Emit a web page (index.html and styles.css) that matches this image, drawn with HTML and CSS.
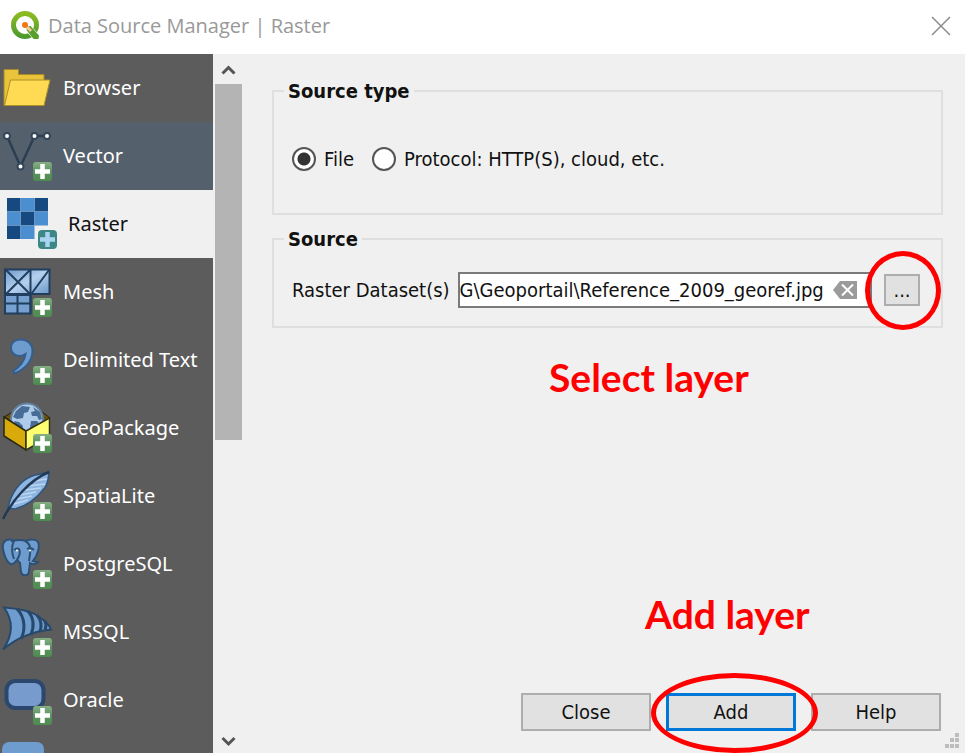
FILE: index.html
```html
<!DOCTYPE html>
<html lang="en">
<head>
<meta charset="utf-8">
<title>Data Source Manager | Raster</title>
<link rel="stylesheet" href="styles.css">
</head>
<body>
<svg class="defs" aria-hidden="true">
  <defs>
    <linearGradient id="sky" x1="0" y1="0" x2="1" y2="1"><stop offset="0" stop-color="#6f9bcb"/><stop offset="0.5" stop-color="#b4d0ee"/><stop offset="1" stop-color="#6b98c9"/></linearGradient>
    <linearGradient id="leaf" x1="0" y1="0" x2="0" y2="1"><stop offset="0" stop-color="#86b085"/><stop offset="0.5" stop-color="#5c9160"/><stop offset="1" stop-color="#4f8b4f"/></linearGradient>
    <linearGradient id="ring" x1="0" y1="0" x2="0" y2="1"><stop offset="0" stop-color="#8dbb22"/><stop offset="1" stop-color="#4f9a2f"/></linearGradient>
    <g id="plus">
      <rect x="33" y="40" width="19" height="19" rx="3" fill="url(#leaf)"/>
      <path d="M42.500 42v15M35 49.500h15" stroke="#fff" stroke-width="4.500" fill="none"/>
    </g>
  </defs>
</svg>
<header class="titlebar">
  <svg class="logo" viewBox="0 0 30 30" aria-hidden="true">
    <circle cx="15" cy="14" r="11.500" fill="none" stroke="url(#ring)" stroke-width="5"/>
    <path d="M14 13l5 0 10 10.500v4h-6L14 18z" fill="#fff"/>
    <path d="M17 15.500l3.500-.5 8.500 9.500-.5 3.500h-5L16.500 19z" fill="#579f2c"/>
    <path d="M15 14l6 6" stroke="#f9c79b" stroke-width="3"/>
    <circle cx="15" cy="14" r="3" fill="#ee7913"/>
  </svg>
  <h1 class="title">Data Source Manager | Raster</h1>
  <button class="window-close" type="button" aria-label="Close window">
    <svg viewBox="0 0 20 20"><path d="M1 1l18 18M19 1L1 19" stroke="#8b8b8b" stroke-width="1.500"/></svg>
  </button>
</header>
<div class="body">
  <nav class="sources">
    <a class="source" href="#browser">
      <svg viewBox="0 0 60 68"><path d="M4 51V15.500h14.500v5H44V51z" fill="#e9c33a" stroke="#a58a26"/><path d="M10.500 26H50l-6 25.500H4.500z" fill="#fedb53" stroke="#ae9228"/></svg>
      Browser</a>
    <a class="source hovered" href="#vector">
      <svg viewBox="0 0 60 68"><path d="M7 14l13.500 30.500L34.500 14H47" fill="none" stroke="#2b3e52" stroke-width="2.500"/><g fill="#fff" stroke="#34465a" stroke-width="2"><circle cx="7" cy="14" r="3"/><circle cx="20.500" cy="44.500" r="3"/><circle cx="34.500" cy="14" r="3"/><circle cx="47" cy="14" r="3"/></g><use href="#plus"/></svg>
      Vector</a>
    <a class="source selected" href="#raster">
      <svg viewBox="0 0 60 68"><path d="M2 8h41v27.500H29.500V49H2z" fill="#4b8fd0"/><path d="M2 8h13.500v13.500H2zM29.500 8H43v13.500H29.500zM15.500 21.500h14v14h-14zM2 35.500h13.500V49H2z" fill="#16497f"/><path d="M15.500 8v41M29.500 8v27.500M2 21.500h41M2 35.500h41" stroke="#a6bed5" opacity=".5"/><rect x="33" y="40" width="19" height="19" rx="4" fill="#3d8784"/><path d="M42.500 42v15M35 49.500h15" stroke="#a9d4f2" stroke-width="4.500"/></svg>
      Raster</a>
    <a class="source" href="#mesh">
      <svg viewBox="0 0 60 68"><g stroke="#213e5e" stroke-width="2"><path d="M5 11.500h44.500V36H5z" fill="url(#sky)"/><path d="M5 36h25.500v19.500H5z" fill="#75a0d0"/><path d="M6 12l24 24M30 12L6 36M32 35l17-23M30.500 11v44.500M17.500 38v17M5 45.500h25" fill="none"/><path d="M4 36.500h27" stroke-width="3"/></g><use href="#plus"/></svg>
      Mesh</a>
    <a class="source" href="#delimited-text">
      <svg viewBox="0 0 60 68"><path d="M20.500 13.500C14.500 13.500 11 17 11 22c0 5 4 8 8.500 8 2.500 0 4-.8 6-2-1 7-5 12-12 17l1 2.500C25 43 32 36 32.500 25.500c.3-7-5-12-12-12z" fill="#6e9cce" stroke="#335e8e" stroke-width="2"/><use href="#plus"/></svg>
      Delimited Text</a>
    <a class="source" href="#geopackage">
      <svg viewBox="0 0 60 68"><path d="M4 23l10-6h27l9 7-24 14z" fill="#6b5209" stroke="#222"/><circle cx="27" cy="25.500" r="16" fill="#aecbe9" stroke="#63809f" stroke-width="2"/><path d="M16 17l6-5 8 1-2 5-4 1-1 5-6 1-4-2zM33 13l7 5 2 7-3 1-2-4-5 0-1-4 4-1zM14 27l5 1 4 4-1 5-5-2zM31 27l6 0 3 4-5 6-5-3z" fill="#476d97"/><path d="M4 23l22 14v19L4 42z" fill="#d8aa0a" stroke="#282717" stroke-width="1.500"/><path d="M26 37l23.500-13v19L26 56z" fill="#ffff72" stroke="#353416" stroke-width="1.500"/><use href="#plus"/></svg>
      GeoPackage</a>
    <a class="source" href="#spatialite">
      <svg viewBox="0 0 60 68"><path d="M8 46C11 31 20 19 31 14.500c6-2.500 12-2 18-5-1 6 0 10-4 16C37 36 27 44 15 47z" fill="#8eb5df" stroke="#2e557e" stroke-width="1.500"/><path d="M17 37l15-3M20 33l16-3M24 28l17-2M28 24l17-2M14 42l14-4M33 19l14-2" stroke="#bcd6f1" stroke-width="1.500"/><path d="M49 10C30 18 13 37 3 57" fill="none" stroke="#213956" stroke-width="2.500"/><use href="#plus"/></svg>
      SpatiaLite</a>
    <a class="source" href="#postgresql">
      <svg viewBox="0 0 60 68"><g fill="#6e9cce" stroke="#2d5075" stroke-width="2"><path d="M12 10C5 8 2 13 3 19c1 6 4 14 8 15 3 1 4-2 6-4l3 3 1 9c1 5 8 4 8-1l1-8c3 2 6 1 8-1l-5-1c5-6 7-15 5-19-2-3-8-3-12-1-5-2-10-1-14 0z"/><path d="M14 11c-3 5-2 13 0 18M25 11c5 2 6 7 5 13l-1 7M14 20c5-4 7 0 5 6l-2 4M27 19c3-2 5-1 7 1" fill="none"/></g><circle cx="17" cy="20.500" r="1" fill="#fff"/><circle cx="30" cy="20.500" r="1" fill="#fff"/><use href="#plus"/></svg>
      PostgreSQL</a>
    <a class="source" href="#mssql">
      <svg viewBox="0 0 60 68"><g fill="#6e9cce" stroke="#28496c" stroke-width="2"><path d="M4 9.500c14 1 25 3 33 8 6 4 12 8 14 14-19 2-35 9-48 20 9-13 11-28 1-42z"/><path d="M17 11c9 9 8 22 4 30M28 13c7 8 6 16 3 24M37 17c5 6 5 11 3 17M45 23c2 4 1 6 0 9" fill="none" stroke-width="3"/></g><use href="#plus"/></svg>
      MSSQL</a>
    <a class="source" href="#oracle">
      <svg viewBox="0 0 60 68"><rect x="6.500" y="15" width="37" height="27" rx="9" fill="#779bcd" stroke="#2b476d" stroke-width="4"/><use href="#plus"/></svg>
      Oracle</a>
    <a class="source" href="#more" aria-label="More sources">
      <svg viewBox="0 0 60 68"><rect x="2" y="8" width="42" height="36" rx="7" fill="#6e9cce"/></svg></a>
  </nav>
  <div class="scrollbar" aria-hidden="true">
    <svg class="arrow" viewBox="0 0 27 30"><path d="M7.500 19.500l6-6 6 6" fill="none" stroke="#555" stroke-width="3"/></svg>
    <div class="thumb"></div>
    <svg class="arrow down" viewBox="0 0 27 30"><path d="M7.500 15l6 6 6-6" fill="none" stroke="#555" stroke-width="3"/></svg>
  </div>
  <main class="panel">
    <fieldset class="group">
      <legend>Source type</legend>
      <div class="choices">
        <label class="choice"><input type="radio" name="kind" checked>File</label>
        <label class="choice"><input type="radio" name="kind">Protocol: HTTP(S), cloud, etc.</label>
      </div>
    </fieldset>
    <fieldset class="group">
      <legend>Source</legend>
      <div class="dataset">
        <label for="dataset">Raster Dataset(s)</label>
        <div class="field">
          <input id="dataset" type="text" value="G\Geoportail\Reference_2009_georef.jpg">
          <button class="clear" type="button" aria-label="Clear">
            <svg viewBox="0 0 24 18"><path d="M0 9l7-9h17v18H7z" fill="#9b9b9b"/><path d="M9 3.500l11 11M20 3.500l-11 11" stroke="#fff" stroke-width="2"/></svg>
          </button>
        </div>
        <div class="marked">
          <button class="browse" type="button">...</button>
          <span class="ellipse small"></span>
        </div>
      </div>
    </fieldset>
    <p class="note select-note">Select layer</p>
    <footer class="actions">
      <button class="action" type="button">Close</button>
      <div class="marked">
        <button class="action primary" type="button">Add</button>
        <span class="ellipse wide"></span>
        <p class="note add-note">Add layer</p>
      </div>
      <button class="action" type="button">Help</button>
    </footer>
    <svg class="grip" viewBox="0 0 16 16" aria-hidden="true"><path d="M11 0h4v4h-4zM6 5h4v4H6zM11 5h4v4h-4zM1 11h4v4H1zM6 11h4v4H6zM11 11h4v4h-4z" fill="#bdbdbd"/></svg>
  </main>
</div>
</body>
</html>
```
FILE: styles.css
```css
* { box-sizing: border-box; }

body {
  margin: 0;
  height: 100vh;
  display: flex;
  flex-direction: column;
  overflow: hidden;
  background: #f0f0f0;
  color: #111;
  font: 20px/24px "DejaVu Sans Condensed", "DejaVu Sans", sans-serif;
}

button, input { font: inherit; color: inherit; }
.defs { position: absolute; width: 0; height: 0; }

.titlebar {
  flex: none;
  display: flex;
  align-items: center;
  height: 54px;
  padding: 0 14px 3px 10px;
  background: #fff;
  color: #999;
}
.logo { width: 30px; height: 30px; }
.title {
  flex: 1;
  margin: 0 0 0 8px;
  font: 400 20px/28px "Open Sans", sans-serif;
}
.window-close { width: 20px; height: 20px; padding: 0; border: 0; background: none; }
.window-close svg { display: block; }

.body { flex: 1; min-height: 0; display: flex; }

.sources {
  flex: none;
  width: 213px;
  overflow: hidden;
  background: #5c5c5c;
}
.source {
  display: flex;
  align-items: center;
  gap: 3px;
  height: 68px;
  color: #fff;
  font: 20px/28px "Noto Sans", sans-serif;
  text-decoration: none;
  white-space: nowrap;
}
.source svg { flex: none; width: 60px; height: 68px; }
.hovered { background: #54616c; }
.selected { padding-left: 5px; background: #f0f0f0; color: #111; }

.scrollbar {
  flex: none;
  display: flex;
  flex-direction: column;
  width: 29px;
  padding-left: 2px;
}
.arrow { flex: none; width: 27px; height: 30px; }
.thumb { flex: 0 0 51%; background: #b4b4b4; }
.down { margin-top: auto; }

.panel {
  position: relative;
  flex: 1;
  min-width: 0;
  display: flex;
  flex-direction: column;
  padding: 25px 22px 22px 30px;
}
.group {
  min-width: 0;
  margin: 0 0 12px;
  padding: 0 21px 0 18px;
  border: 2px solid #dfdfdf;
}
.group legend { margin-left: -8px; padding: 0 4px; font-weight: 700; }

.choices { display: flex; gap: 18px; padding: 44px 0 42px; }
.choice { display: flex; align-items: center; gap: 8px; }
.choice input {
  appearance: none;
  width: 24px;
  height: 24px;
  margin: 0;
  border: 2px solid #555;
  border-radius: 50%;
  background: #fff;
}
.choice input:checked { background: radial-gradient(circle, #333 6px, #fff 7px); }

.dataset { display: flex; align-items: center; gap: 12px; padding: 21px 0 18px; }
.dataset label { margin-right: -4px; }
.field { position: relative; flex: 1; min-width: 0; }
.field input {
  display: block;
  width: 100%;
  height: 36px;
  padding: 0 40px 0 0;
  border: 2px solid #7a7a7a;
  background: #fff;
}
.clear {
  position: absolute;
  top: 9px;
  right: 15px;
  width: 24px;
  height: 18px;
  padding: 0;
  border: 0;
  background: none;
}
.clear svg { display: block; }
.marked { position: relative; }
.browse {
  display: block;
  width: 36px;
  height: 32px;
  padding: 0;
  border: 2px solid #adadad;
  background: #e1e1e1;
}

.ellipse {
  position: absolute;
  border: 5px solid #f00;
  border-radius: 50%;
  pointer-events: none;
}
.small { inset: -23px -21px -24px -19px; }
.wide { inset: -20px -22px -22px -15px; }

.note {
  margin: 0;
  color: #f00;
  font: 700 39px/48px Lato, sans-serif;
  white-space: nowrap;
}
.select-note { padding: 13px 0 0 277px; }
.add-note { position: absolute; bottom: 93px; left: -21px; }

.actions { display: flex; justify-content: flex-end; gap: 15px; margin-top: auto; padding-right: 2px; }
.action {
  width: 130px;
  height: 38px;
  padding: 0;
  border: 2px solid #adadad;
  background: #e1e1e1;
}
.primary { display: block; border: 3px solid #0078d7; }
.grip { position: absolute; right: 5px; bottom: 4px; width: 16px; height: 16px; }
```
